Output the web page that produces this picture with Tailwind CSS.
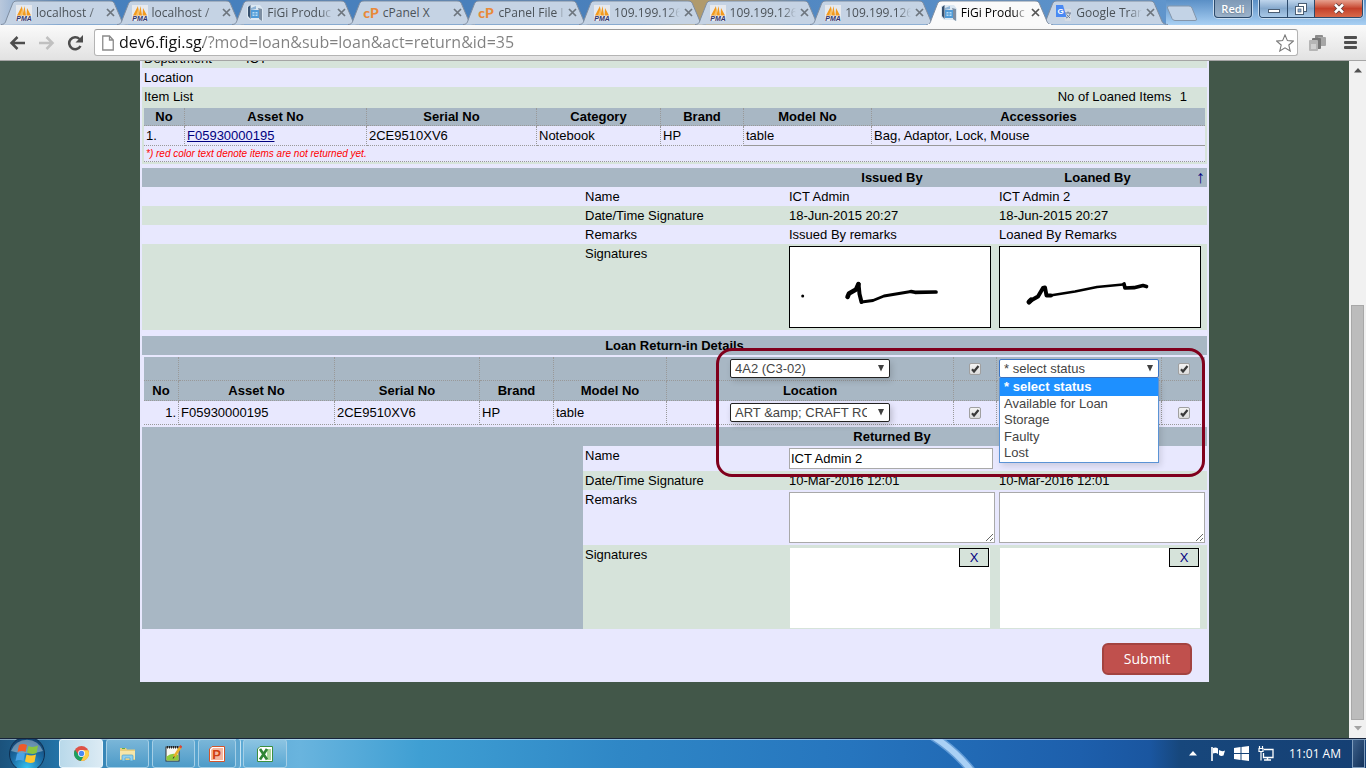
<!DOCTYPE html>
<html lang="en">
<head>
<meta charset="utf-8">
<title>FiGi Productivity Tools</title>
<script src="https://cdn.jsdelivr.net/npm/@tailwindcss/browser@4"></script>
</head>
<body class="h-screen overflow-hidden flex flex-col bg-[#425749] font-['Liberation_Sans',Arial,sans-serif] text-[13px] leading-[15px] text-black">

<!-- Shared icon symbols -->
<svg class="hidden" aria-hidden="true">
  <symbol id="tab-shape" viewBox="0 0 131 25">
    <path d="M1 24.500C5 24.500 5.500 22 6.500 19L12 5C13 2 14 1 17 1H110C113 1 114 2 115 5L121 19C122 22 123 24.500 128 24.500" fill="#c5d3e4" stroke="#7f8da0"/>
  </symbol>
  <symbol id="tab-active" viewBox="0 0 131 25">
    <path d="M1 25C5 25 5.500 22 6.500 19L12 5C13 2 14 1 17 1H110C113 1 114 2 115 5L121 19C122 22 123 25 128 25" fill="#fafafa" stroke="#7f8da0"/>
    <path d="M3 24.500H126" stroke="#fafafa"/>
  </symbol>
  <symbol id="pma" viewBox="0 0 16 16">
    <rect width="16" height="16" fill="#e6e9ee"/>
    <path d="M1 10.500 6 1V10.500ZM6.500 10.500 8.500 1 10 10.500ZM10.500 10.500 11 3 15 10.500Z" fill="#f39a1e"/>
    <path d="M4 10 7 2V10Z" fill="#f9bf62"/>
    <text x="8" y="16" font-family="Liberation Sans" font-weight="700" font-style="italic" font-size="7" text-anchor="middle" fill="#33366f">PMA</text>
  </symbol>
  <symbol id="figi" viewBox="0 0 16 16">
    <path d="M0 1 4 0H13L16 4V16L12 15H3L0 12Z" fill="#dce8f2"/>
    <path d="M1 2 3.500 0V14L1 11Z" fill="#37516f"/>
    <path d="M4 3 9 1V4L4 5Z" fill="#8fb4d6"/>
    <path d="M11 3 15 4V16L12 14V6Z" fill="#7d8ea2"/>
    <rect x="4" y="5" width="8" height="8" fill="#4f9bd8"/>
    <path d="M5.500 7H10.500V11H5.500Z" fill="#b9dcf4"/>
    <path d="M5.500 9H10.500M8 7V11" stroke="#4f9bd8"/>
  </symbol>
  <symbol id="cp" viewBox="0 0 16 16">
    <text x="8" y="13" font-family="Lato" font-weight="900" font-size="14" text-anchor="middle" fill="#e8893a">cP</text>
  </symbol>
  <symbol id="gtr" viewBox="0 0 16 16">
    <path d="M6 4H15V16H9Z" fill="#d5dbe4"/>
    <path d="M9 8H15M12 6.500V8M10 13C13 12 14 10 14 8M10.500 9.500 14 13" stroke="#6c7f99" fill="none"/>
    <path d="M0 0H7L10.500 12H0Z" fill="#4a89f3"/>
    <text x="4.500" y="9" font-family="Liberation Sans" font-weight="700" font-size="8" text-anchor="middle" fill="#fff">G</text>
  </symbol>
  <symbol id="close" viewBox="0 0 9 9"><path d="M1 1 8 8M8 1 1 8" stroke="currentColor" stroke-width="1.700"/></symbol>
  <symbol id="tick" viewBox="0 0 12 12"><path d="M3 6.300 5 8.500 9.500 3" fill="none" stroke="#3a3a3a" stroke-width="2.200"/></symbol>
  <symbol id="down" viewBox="0 0 8 7"><path d="M1 0H7L4 6.500Z" fill="#404040"/></symbol>
</svg>

<!-- Browser tab strip -->
<header class="relative h-[25px] shrink-0 flex items-stretch bg-[linear-gradient(90deg,#b9c8dc_0px,#4680be_60px,#4a80bb_640px,#b09a6c_690px,#b09a6c_750px,#5288c2_800px,#5f94cb_1150px,#6ea2d6_1366px)] font-['Open_Sans',sans-serif] text-[12px] text-[#4b5258]">
  <div class="absolute inset-y-0 right-0 w-[200px] bg-linear-to-b from-[#5a8fc6] to-[#a9d0f3]"></div>
  <nav class="relative flex w-[1156px] ml-[8px]" aria-label="Tabs">
    <a href="#" class="relative flex-1 flex items-center pl-[8px]"><svg class="absolute top-0 -left-[8px] w-[131px] h-[25px]"><use href="#tab-shape"/></svg><svg class="relative w-[16px] h-[16px] shrink-0"><use href="#pma"/></svg><span class="relative ml-[4px] w-[66px] whitespace-nowrap mask-r-from-80%">localhost /</span><svg class="relative ml-[4px] w-[9px] h-[9px] shrink-0 text-[#6d757e]"><use href="#close"/></svg></a>
    <a href="#" class="relative flex-1 flex items-center pl-[8px]"><svg class="absolute top-0 -left-[8px] w-[131px] h-[25px]"><use href="#tab-shape"/></svg><svg class="relative w-[16px] h-[16px] shrink-0"><use href="#pma"/></svg><span class="relative ml-[4px] w-[66px] whitespace-nowrap mask-r-from-80%">localhost /</span><svg class="relative ml-[4px] w-[9px] h-[9px] shrink-0 text-[#6d757e]"><use href="#close"/></svg></a>
    <a href="#" class="relative flex-1 flex items-center pl-[8px]"><svg class="absolute top-0 -left-[8px] w-[131px] h-[25px]"><use href="#tab-shape"/></svg><svg class="relative w-[16px] h-[16px] shrink-0"><use href="#figi"/></svg><span class="relative ml-[4px] w-[66px] whitespace-nowrap mask-r-from-80%">FiGi Produc</span><svg class="relative ml-[4px] w-[9px] h-[9px] shrink-0 text-[#6d757e]"><use href="#close"/></svg></a>
    <a href="#" class="relative flex-1 flex items-center pl-[8px]"><svg class="absolute top-0 -left-[8px] w-[131px] h-[25px]"><use href="#tab-shape"/></svg><svg class="relative w-[16px] h-[16px] shrink-0"><use href="#cp"/></svg><span class="relative ml-[4px] w-[66px] whitespace-nowrap">cPanel X</span><svg class="relative ml-[4px] w-[9px] h-[9px] shrink-0 text-[#6d757e]"><use href="#close"/></svg></a>
    <a href="#" class="relative flex-1 flex items-center pl-[8px]"><svg class="absolute top-0 -left-[8px] w-[131px] h-[25px]"><use href="#tab-shape"/></svg><svg class="relative w-[16px] h-[16px] shrink-0"><use href="#cp"/></svg><span class="relative ml-[4px] w-[66px] whitespace-nowrap mask-r-from-90%">cPanel File I</span><svg class="relative ml-[4px] w-[9px] h-[9px] shrink-0 text-[#6d757e]"><use href="#close"/></svg></a>
    <a href="#" class="relative flex-1 flex items-center pl-[8px]"><svg class="absolute top-0 -left-[8px] w-[131px] h-[25px]"><use href="#tab-shape"/></svg><svg class="relative w-[16px] h-[16px] shrink-0"><use href="#pma"/></svg><span class="relative ml-[4px] w-[66px] whitespace-nowrap mask-r-from-80%">109.199.126</span><svg class="relative ml-[4px] w-[9px] h-[9px] shrink-0 text-[#6d757e]"><use href="#close"/></svg></a>
    <a href="#" class="relative flex-1 flex items-center pl-[8px]"><svg class="absolute top-0 -left-[8px] w-[131px] h-[25px]"><use href="#tab-shape"/></svg><svg class="relative w-[16px] h-[16px] shrink-0"><use href="#pma"/></svg><span class="relative ml-[4px] w-[66px] whitespace-nowrap mask-r-from-80%">109.199.126</span><svg class="relative ml-[4px] w-[9px] h-[9px] shrink-0 text-[#6d757e]"><use href="#close"/></svg></a>
    <a href="#" class="relative flex-1 flex items-center pl-[8px]"><svg class="absolute top-0 -left-[8px] w-[131px] h-[25px]"><use href="#tab-shape"/></svg><svg class="relative w-[16px] h-[16px] shrink-0"><use href="#pma"/></svg><span class="relative ml-[4px] w-[66px] whitespace-nowrap mask-r-from-80%">109.199.126</span><svg class="relative ml-[4px] w-[9px] h-[9px] shrink-0 text-[#6d757e]"><use href="#close"/></svg></a>
    <a href="#" class="relative z-10 flex-1 flex items-center pl-[8px] text-black" aria-current="page"><svg class="absolute top-0 -left-[8px] w-[131px] h-[25px]"><use href="#tab-active"/></svg><svg class="relative w-[16px] h-[16px] shrink-0"><use href="#figi"/></svg><span class="relative ml-[4px] w-[66px] whitespace-nowrap mask-r-from-80%">FiGi Produc</span><svg class="relative ml-[4px] w-[9px] h-[9px] shrink-0 text-[#555]"><use href="#close"/></svg></a>
    <a href="#" class="relative flex-1 flex items-center pl-[8px]"><svg class="absolute top-0 -left-[8px] w-[131px] h-[25px]"><use href="#tab-shape"/></svg><svg class="relative w-[16px] h-[16px] shrink-0"><use href="#gtr"/></svg><span class="relative ml-[4px] w-[66px] whitespace-nowrap mask-r-from-80%">Google Trar</span><svg class="relative ml-[4px] w-[9px] h-[9px] shrink-0 text-[#6d757e]"><use href="#close"/></svg></a>
  </nav>
  <button class="relative w-[32px] h-[17px] mt-[5px] ml-[2px] shrink-0" aria-label="New tab">
    <svg viewBox="0 0 32 17" class="w-[32px] h-[17px]"><path d="M1.500 3Q1 1 3 1H23Q25 1 26 3L30.500 14Q31 15.500 29 15.500H9Q7 15.500 6 13.500Z" fill="#c3d3e6" stroke="#8496ab"/></svg>
  </button>
  <div class="relative ml-auto mr-[3px] flex items-start">
    <button class="w-[38px] h-[18px] mr-[7px] rounded-b-[4px] border border-t-0 border-[#2c4a6b] bg-linear-to-b from-[#7e99b6] to-[#9db4cc] text-white font-semibold text-[11px] leading-[17px] text-shadow-md shadow-[0_0_0_1px_#c8dcf0]">Redi</button>
    <div class="flex h-[18px] rounded-b-[4px] border border-t-0 border-[#2c4a6b] overflow-hidden shadow-[0_0_0_1px_#c8dcf0]">
      <button class="w-[28px] grid place-items-center border-r border-[#2c4a6b] bg-linear-to-b from-[#bfd5ec] via-[#86a9cd] to-[#a9c9e8]" aria-label="Minimize"><svg viewBox="0 0 12 4" class="w-[12px] h-[4px] mt-[4px]"><rect x=".500" y=".500" width="11" height="3" fill="#fff" stroke="#4a5d73"/></svg></button>
      <button class="w-[27px] grid place-items-center border-r border-[#2c4a6b] bg-linear-to-b from-[#bfd5ec] via-[#86a9cd] to-[#a9c9e8]" aria-label="Restore"><svg viewBox="0 0 12 12" class="w-[12px] h-[12px]"><rect x="3.500" y=".500" width="8" height="8" fill="#fff" stroke="#4a5d73"/><rect x=".500" y="3.500" width="8" height="8" fill="#fff" stroke="#4a5d73"/><rect x="3" y="6" width="3" height="3" fill="#8fb0d3" stroke="#4a5d73" stroke-width=".7"/></svg></button>
      <button class="w-[47px] grid place-items-center bg-linear-to-b from-[#e6a08e] via-[#c4402a] to-[#d8694a]" aria-label="Close"><svg viewBox="0 0 12 11" class="w-[12px] h-[11px]"><path d="M2 1.500 10 9.500M10 1.500 2 9.500" stroke="#5b3a3a" stroke-width="4"/><path d="M2 1.500 10 9.500M10 1.500 2 9.500" stroke="#fff" stroke-width="2.500"/></svg></button>
    </div>
  </div>
</header>

<!-- Toolbar -->
<div class="h-[36px] shrink-0 flex items-center bg-linear-to-b from-[#fafafa] to-[#e2e2e2] border-b border-[#a5a5a5] pl-[9px] pr-[9px]">
  <button class="w-[17px] h-[16px]" aria-label="Back"><svg viewBox="0 0 17 16" class="w-[17px] h-[16px]" fill="none" stroke="#4d4d4d" stroke-width="2.500"><path d="M2.500 8H16M8.500 2 2.500 8 8.500 14"/></svg></button>
  <button class="w-[17px] h-[16px] ml-[12px]" aria-label="Forward"><svg viewBox="0 0 17 16" class="w-[17px] h-[16px]" fill="none" stroke="#c0c0c0" stroke-width="2.500"><path d="M1 8H14.500M8.500 2 14.500 8 8.500 14"/></svg></button>
  <button class="w-[17px] h-[16px] ml-[12px]" aria-label="Reload"><svg viewBox="0 0 17 16" class="w-[17px] h-[16px]"><path d="M13.500 11A6 6 0 1 1 12.500 4" fill="none" stroke="#4d4d4d" stroke-width="2.500"/><path d="M16 0V7.500H8.500Z" fill="#4d4d4d"/></svg></button>
  <div class="ml-[10px] flex-1 h-[27px] flex items-center bg-white border border-[#b4b4b4] border-t-[#9a9a9a] rounded-[3px] pl-[7px] pr-[3px]">
    <svg viewBox="0 0 12 16" class="w-[12px] h-[16px] shrink-0"><path d="M.75 1H7.500L11.250 5V15H.75ZM7.500 1V5H11.250" fill="#fff" stroke="#8a8a8a" stroke-width="1.300"/></svg>
    <input aria-label="Address" value="dev6.figi.sg/?mod=loan&amp;sub=loan&amp;act=return&amp;id=35" class="flex-1 min-w-0 ml-[5px] mb-[2px] outline-none font-['Open_Sans',sans-serif] text-[16px] leading-[22px] bg-[linear-gradient(90deg,#111_84px,#808080_84px)] bg-clip-text text-transparent">
    <svg viewBox="0 0 18 18" class="w-[18px] h-[18px] shrink-0"><path d="M9 1 11.400 6.600 17.300 7.100 12.800 11 14.200 17 9 13.800 3.800 17 5.200 11 .700 7.100 6.600 6.600Z" fill="#fff" stroke="#777" stroke-width="1.100"/></svg>
  </div>
  <svg viewBox="0 0 17 16" class="w-[17px] h-[16px] ml-[11px]"><rect x="6" y="0" width="8" height="10" rx="1" fill="#8c8c8c"/><rect x="9" y="2" width="8" height="9" rx="1" fill="#a6a6a6"/><rect x="3" y="3" width="9" height="11" rx="1" fill="#777"/><rect x="0" y="5" width="9" height="11" rx="1" fill="#b5b5b5"/><rect x="2" y="9" width="5" height="5" fill="#d0d0d0"/></svg>
  <button class="w-[13px] h-[13px] ml-[18px] flex flex-col justify-between" aria-label="Menu"><span class="h-[3px] w-full bg-[#4f4f4f] rounded-[1px]"></span><span class="h-[3px] w-full bg-[#4f4f4f] rounded-[1px]"></span><span class="h-[3px] w-full bg-[#4f4f4f] rounded-[1px]"></span></button>
</div>

<!-- Page viewport -->
<div class="flex-1 min-h-0 flex">
  <main class="flex-1 min-w-0 overflow-hidden">
    <form class="relative mx-auto w-full max-w-[1069px] bg-[#e8e8fe] px-[2px] pb-[7px]">
      <div class="h-[7px] overflow-hidden flex items-end bg-[#d6e3da] px-[2px]">
        <div class="flex h-[19px] py-[2px]"><span class="w-[102px]">Department</span><span>ICT</span></div>
      </div>
      <div class="px-[2px] py-[2px]">Location</div>

      <section class="bg-[#d6e3da] px-[2px] pb-[2px]">
        <div class="flex justify-between pt-[2px] pb-[4px]"><span>Item List</span><span class="pr-[18px]">No of Loaned Items <span class="ml-[5px]">1</span></span></div>
        <table class="w-full table-fixed border-separate border-spacing-0">
          <colgroup><col class="w-[41px]"><col class="w-[182px]"><col class="w-[170px]"><col class="w-[124px]"><col class="w-[83px]"><col class="w-[128px]"><col></colgroup>
          <thead class="bg-[#a8b7c4]">
            <tr>
              <th class="h-[18px] p-0 border-b border-r border-dotted border-[#999]">No</th>
              <th class="p-0 border-b border-r border-dotted border-[#999]">Asset No</th>
              <th class="p-0 border-b border-r border-dotted border-[#999]">Serial No</th>
              <th class="p-0 border-b border-r border-dotted border-[#999]">Category</th>
              <th class="p-0 border-b border-r border-dotted border-[#999]">Brand</th>
              <th class="p-0 border-b border-r border-dotted border-[#999]">Model No</th>
              <th class="p-0 border-b border-dotted border-[#999]">Accessories</th>
            </tr>
          </thead>
          <tbody class="bg-[#e8e8fe]">
            <tr>
              <td class="h-[20px] px-[2px] py-0 border-b border-r border-dotted border-[#999]">1.</td>
              <td class="px-[2px] py-0 border-b border-r border-dotted border-[#999]"><a href="#" class="text-[#000080] underline">F05930000195</a></td>
              <td class="px-[2px] py-0 border-b border-r border-dotted border-[#999]">2CE9510XV6</td>
              <td class="px-[2px] py-0 border-b border-r border-dotted border-[#999]">Notebook</td>
              <td class="px-[2px] py-0 border-b border-r border-dotted border-[#999]">HP</td>
              <td class="px-[2px] py-0 border-b border-r border-dotted border-[#999] [border-bottom-style:solid]">table</td>
              <td class="px-[2px] py-0 border-b border-solid border-[#999]">Bag, Adaptor, Lock, Mouse</td>
            </tr>
            <tr><td colspan="7" class="h-[16px] px-[2px] py-0 border-b border-dotted border-[#999] text-[10px] leading-[12px] italic text-[#f00]">*) red color text denote items are not returned yet.</td></tr>
          </tbody>
        </table>
      </section>

      <table class="mt-[4px] w-full table-fixed border-separate border-spacing-0">
        <colgroup><col><col class="w-[204px]"><col class="w-[210px]"><col class="w-[210px]"></colgroup>
        <tbody>
          <tr class="bg-[#a8b7c4]"><td class="p-0"></td><td class="p-0"></td><th class="p-[2px]">Issued By</th><th class="p-[2px]"><div class="flex items-center h-[15px]"><span class="flex-1">Loaned By</span><a href="#" class="font-normal text-[18px] leading-[15px] font-['Liberation_Serif',serif] text-[#000080]">↑</a></div></th></tr>
          <tr><td class="p-0"></td><td class="p-[2px]">Name</td><td class="p-[2px]">ICT Admin</td><td class="p-[2px]">ICT Admin 2</td></tr>
          <tr class="bg-[#d6e3da]"><td class="p-0"></td><td class="p-[2px]">Date/Time Signature</td><td class="p-[2px]">18-Jun-2015 20:27</td><td class="p-[2px]">18-Jun-2015 20:27</td></tr>
          <tr><td class="p-0"></td><td class="p-[2px]">Remarks</td><td class="p-[2px]">Issued By remarks</td><td class="p-[2px]">Loaned By Remarks</td></tr>
          <tr class="bg-[#d6e3da] align-top"><td class="p-0"></td><td class="p-[2px]">Signatures</td>
            <td class="p-[2px]"><div class="w-[202px] h-[82px] bg-white border border-black"><svg viewBox="790 247 200 80" class="w-[200px] h-[80px]" fill="none" stroke="#000" stroke-linecap="round" stroke-linejoin="round"><circle cx="802.700" cy="296" r="1.500" fill="#000" stroke="none"/><path d="M847.500 297 849 293.500 856 289.500 858.500 284" stroke-width="4.500"/><path d="M858.500 284 859.500 294 861.500 302" stroke-width="4"/><path d="M861.500 302 873 300.500 884 296 911 291.500" stroke-width="2.800"/><path d="M911 291.500 915 292.300 936 292" stroke-width="3.700"/></svg></div></td>
            <td class="p-[2px]"><div class="w-[202px] h-[82px] bg-white border border-black"><svg viewBox="1000 247 200 80" class="w-[200px] h-[80px]" fill="none" stroke="#000" stroke-linecap="round" stroke-linejoin="round"><path d="M1029 302 1031 300" stroke-width="5"/><path d="M1030 301 1038 296.500 1043 288 1045 287.500 1046.500 295.500 1051 295.500" stroke-width="4"/><path d="M1050 295.500 1075 291.500 1097 287 1123 284.500" stroke-width="2.500"/><path d="M1124 284 1125 288 1134 287.700 1143 285.500 1146.500 286.500" stroke-width="3.700"/></svg></div></td>
          </tr>
        </tbody>
      </table>

      <h2 class="mt-[6px] py-[2px] text-center font-bold bg-[#a8b7c4]">Loan Return-in Details</h2>

      <div class="p-[2px]">
        <table class="w-full table-fixed border-separate border-spacing-0">
          <colgroup><col class="w-[35px]"><col class="w-[156px]"><col class="w-[145px]"><col class="w-[74px]"><col class="w-[113px]"><col><col class="w-[43px]"><col class="w-[165px]"><col class="w-[43px]"></colgroup>
          <thead class="bg-[#a8b7c4]">
            <tr>
              <td class="h-[24px] p-0 border-b border-r border-dotted border-[#999]"></td>
              <td class="p-0 border-b border-r border-dotted border-[#999]"></td>
              <td class="p-0 border-b border-r border-dotted border-[#999]"></td>
              <td class="p-0 border-b border-r border-dotted border-[#999]"></td>
              <td class="p-0 border-b border-r border-dotted border-[#999]"></td>
              <td class="p-0 border-b border-r border-dotted border-[#999]">
                <div class="relative mx-auto w-[160px]"><select aria-label="Location for all items" class="block appearance-none w-full h-[19px] pl-[4px] pr-[22px] bg-white border border-[#222] rounded-[2px] text-[#444] shadow-[2px_3px_6px_rgba(0,0,0,0.15)]"><option>4A2 (C3-02)</option></select><svg class="absolute right-[5px] top-[6px] w-[8px] h-[7px]"><use href="#down"/></svg></div>
              </td>
              <td class="p-0 border-b border-r border-dotted border-[#999]"><div class="relative mx-auto w-[12px] h-[12px]"><input type="checkbox" checked aria-label="Apply location to all" class="block appearance-none w-[12px] h-[12px] border border-[#a0a0a0] rounded-[2px] bg-linear-to-b from-[#f4f4f4] to-[#dcdcdc]"><svg class="absolute inset-0 w-[12px] h-[12px]"><use href="#tick"/></svg></div></td>
              <td class="p-0 border-b border-r border-dotted border-[#999]">
                <div class="relative mx-auto w-[160px]">
                  <select aria-label="Status for all items" class="block appearance-none w-full h-[19px] pl-[4px] pr-[22px] bg-white border border-[#3b74c4] rounded-[2px] text-[#444]"><option>* select status</option></select><svg class="absolute right-[5px] top-[6px] w-[8px] h-[7px]"><use href="#down"/></svg>
                  <ul class="absolute z-10 top-full left-0 w-full h-[85px] bg-white border border-t-0 border-[#5b93d5] text-[#444] leading-[16px] shadow-[2px_3px_6px_rgba(0,0,0,0.12)]">
                    <li class="h-[18px] pl-[4px] leading-[18px] font-bold text-white bg-[#1e90ff]">* select status</li>
                    <li class="pl-[4px]">Available for Loan</li>
                    <li class="pl-[4px]">Storage</li>
                    <li class="pl-[4px] leading-[17px]">Faulty</li>
                    <li class="pl-[4px]">Lost</li>
                  </ul>
                </div>
              </td>
              <td class="p-0 border-b border-dotted border-[#999]"><div class="relative mx-auto w-[12px] h-[12px]"><input type="checkbox" checked aria-label="Apply status to all" class="block appearance-none w-[12px] h-[12px] border border-[#a0a0a0] rounded-[2px] bg-linear-to-b from-[#f4f4f4] to-[#dcdcdc]"><svg class="absolute inset-0 w-[12px] h-[12px]"><use href="#tick"/></svg></div></td>
            </tr>
            <tr>
              <th class="h-[20px] p-0 border-b border-r border-dotted border-[#999]">No</th>
              <th class="p-0 border-b border-r border-dotted border-[#999]">Asset No</th>
              <th class="p-0 border-b border-r border-dotted border-[#999]">Serial No</th>
              <th class="p-0 border-b border-r border-dotted border-[#999]">Brand</th>
              <th class="p-0 border-b border-r border-dotted border-[#999]">Model No</th>
              <th class="p-0 border-b border-r border-dotted border-[#999]">Location</th>
              <td class="p-0 border-b border-r border-dotted border-[#999]"></td>
              <td class="p-0 border-b border-r border-dotted border-[#999]"></td>
              <td class="p-0 border-b border-dotted border-[#999]"></td>
            </tr>
          </thead>
          <tbody>
            <tr>
              <td class="h-[24px] px-[2px] py-0 text-right border-b border-r border-dotted border-[#999]">1.</td>
              <td class="px-[2px] py-0 border-b border-r border-dotted border-[#999]">F05930000195</td>
              <td class="px-[2px] py-0 border-b border-r border-dotted border-[#999]">2CE9510XV6</td>
              <td class="px-[2px] py-0 border-b border-r border-dotted border-[#999]">HP</td>
              <td class="px-[2px] py-0 border-b border-r border-dotted border-[#999]">table</td>
              <td class="p-0 border-b border-r border-dotted border-[#999]">
                <div class="relative mx-auto w-[160px]"><select aria-label="Item location" class="block appearance-none w-full h-[19px] pl-[4px] pr-[22px] bg-white border border-[#222] rounded-[2px] text-[#444] shadow-[2px_3px_6px_rgba(0,0,0,0.2)]"><option>ART &amp;amp; CRAFT ROOM</option></select><svg class="absolute right-[5px] top-[6px] w-[8px] h-[7px]"><use href="#down"/></svg></div>
              </td>
              <td class="p-0 border-b border-r border-dotted border-[#999]"><div class="relative mx-auto w-[12px] h-[12px]"><input type="checkbox" checked aria-label="Apply item location" class="block appearance-none w-[12px] h-[12px] border border-[#a0a0a0] rounded-[2px] bg-linear-to-b from-[#f4f4f4] to-[#dcdcdc]"><svg class="absolute inset-0 w-[12px] h-[12px]"><use href="#tick"/></svg></div></td>
              <td class="p-0 border-b border-r border-dotted border-[#999]"></td>
              <td class="p-0 border-b border-dotted border-[#999]"><div class="relative mx-auto w-[12px] h-[12px]"><input type="checkbox" checked aria-label="Apply item status" class="block appearance-none w-[12px] h-[12px] border border-[#a0a0a0] rounded-[2px] bg-linear-to-b from-[#f4f4f4] to-[#dcdcdc]"><svg class="absolute inset-0 w-[12px] h-[12px]"><use href="#tick"/></svg></div></td>
            </tr>
          </tbody>
        </table>
      </div>

      <table class="w-full table-fixed border-separate border-spacing-0">
        <colgroup><col><col class="w-[204px]"><col class="w-[210px]"><col class="w-[210px]"></colgroup>
        <tbody>
          <tr class="bg-[#a8b7c4]"><td rowspan="5" class="p-0 bg-[#a8b7c4]"></td><td class="p-0"></td><th class="p-[2px]">Returned By</th><td class="p-0"></td></tr>
          <tr class="align-top"><td class="p-[2px]"><label for="returned-name">Name</label></td><td class="p-[2px]"><input id="returned-name" value="ICT Admin 2" class="block w-[204px] h-[21px] px-[1px] bg-white border border-[#a9a9a9]"></td><td class="p-0"></td></tr>
          <tr class="bg-[#d6e3da]"><td class="p-[2px]">Date/Time Signature</td><td class="p-[2px]">10-Mar-2016 12:01</td><td class="p-[2px]">10-Mar-2016 12:01</td></tr>
          <tr class="align-top"><td class="p-[2px]">Remarks</td><td class="p-[2px]"><textarea aria-label="Returned by remarks" class="block w-[206px] h-[51px] bg-white border border-[#a9a9a9]"></textarea></td><td class="p-[2px]"><textarea aria-label="Received by remarks" class="block w-[206px] h-[51px] bg-white border border-[#a9a9a9]"></textarea></td></tr>
          <tr class="bg-[#d6e3da] align-top"><td class="p-[2px]">Signatures</td>
            <td class="px-[3px] pt-[3px] pb-[1px]"><div class="flex justify-end items-start w-[200px] h-[80px] bg-white pr-[1px]"><button type="button" class="w-[30px] h-[19px] bg-[#d6e3da] border border-black text-[#000080]">X</button></div></td>
            <td class="px-[3px] pt-[3px] pb-[1px]"><div class="flex justify-end items-start w-[200px] h-[80px] bg-white pr-[1px]"><button type="button" class="w-[30px] h-[19px] bg-[#d6e3da] border border-black text-[#000080]">X</button></div></td>
          </tr>
        </tbody>
      </table>

      <div class="flex justify-end mt-[14px] pr-[15px]">
        <button type="button" class="w-[90px] h-[32px] rounded-[6px] border-2 border-[#a34340] bg-[#c0504d] text-white font-['Open_Sans',sans-serif] text-[14px] leading-[20px]">Submit</button>
      </div>

      <!-- Highlight frame around the bulk-update controls -->
      <div class="absolute z-20 left-[576px] top-[287px] w-[489px] h-[129px] border-3 border-[#80001c] rounded-[16px] pointer-events-none"></div>
    </form>
  </main>
  <div class="w-[17px] shrink-0 flex flex-col items-center bg-[#f1f1f1]" aria-hidden="true">
    <svg viewBox="0 0 8 5" class="w-[8px] h-[5px] mt-[7px]"><path d="M4 0 8 4.500H0Z" fill="#505050"/></svg>
    <div class="mt-[232px] w-[13px] flex-1 bg-[#bcbcbc] border border-[#a8a8a8]"></div>
    <svg viewBox="0 0 8 5" class="w-[8px] h-[5px] mt-[6px] mb-[7px]"><path d="M4 4.500 8 0H0Z" fill="#a3a3a3"/></svg>
  </div>
</div>

<!-- Taskbar -->
<footer class="relative h-[30px] shrink-0 flex items-stretch border-t border-[#16243a] shadow-[inset_0_1px_0_rgba(255,255,255,0.45)] bg-[linear-gradient(90deg,#1b527c_0px,#2372a6_58px,#4d9bc8_150px,#69b4de_300px,#3f9fd3_420px,#2f87c6_620px,#2675be_850px,#1d5fac_1080px,#1a56a0_1150px,#17477c_1180px,#153f73_1366px)] overflow-hidden">
  <svg viewBox="0 0 60 30" class="absolute left-[925px] top-0 w-[60px] h-[30px]" aria-hidden="true"><path d="M6 -4C22 6 36 18 48 34" fill="none" stroke="#8dbdec" stroke-opacity=".6" stroke-width="9"/><path d="M6 -4C22 6 36 18 48 34" fill="none" stroke="#a9d0f5" stroke-width="6"/></svg>
  <button class="relative w-[36px] ml-[9px] shrink-0" aria-label="Start">
    <svg viewBox="0 0 36 29" class="w-[36px] h-[29px]">
      <defs><radialGradient id="orb" cx=".5" cy=".9" r=".9"><stop offset="0" stop-color="#35c4f2"/><stop offset=".5" stop-color="#1c6fa8"/><stop offset="1" stop-color="#123c68"/></radialGradient></defs>
      <circle cx="18" cy="15" r="17.500" fill="url(#orb)" stroke="#0f2f50"/>
      <path d="M2 12A17 17 0 0 1 34 12Q18 17 2 12Z" fill="#fff" fill-opacity=".35"/>
      <path d="M10 6Q14 4 18 6L16.500 13Q13 11 8.500 13Z" fill="#ee5a2a"/>
      <path d="M19.500 7Q24 9 29 6.500L27.500 14Q23 16 18 13.500Z" fill="#8ac43f"/>
      <path d="M8 14.500Q12 13 16 14.500L14.500 22Q11 20 6.500 22Z" fill="#4aa3e6"/>
      <path d="M17.500 15.500Q22 17.500 27 15.500L25.500 23Q21 25 16 22.500Z" fill="#fdc62f"/>
    </svg>
  </button>
  <div class="relative flex items-stretch ml-[14px]">
    <button aria-label="Chrome" class="w-[44px] grid place-items-center rounded-[3px] border border-[#e9f5fc] bg-linear-to-r from-[#b9d9ea] to-[#dcebf4]">
      <svg viewBox="0 0 16 16" class="w-[15px] h-[15px]"><circle cx="8" cy="8" r="8" fill="#de5246"/><path d="M1.100 4A8 8 0 0 0 7.500 16L11 9.700 8 8 5 9.800Z" fill="#1aa15f"/><path d="M7.500 16A8 8 0 0 0 15.200 4.500H8L11 9.700Z" fill="#fcd048"/><circle cx="8" cy="8" r="3.700" fill="#fff"/><circle cx="8" cy="8" r="2.900" fill="#4a8af4"/></svg>
    </button>
    <button aria-label="File Explorer" class="w-[43px] ml-[3px] grid place-items-center rounded-[3px] border border-[#a5cfe6] bg-linear-to-b from-[#7ab6d8] to-[#4d9bc8]">
      <svg viewBox="0 0 17 16" class="w-[17px] h-[16px]"><path d="M1 2H7L8 3.500H16V14H1Z" fill="#e9cf7c"/><path d="M1 5H16V13H1Z" fill="#f6e6a9"/><path d="M3 2.500H6" stroke="#5cae4b"/><path d="M3 15V10Q3 9 4 9H13Q14 9 14 10V15H11V12H6V15Z" fill="#8fd0ef" stroke="#4a9fca" stroke-width=".7"/></svg>
    </button>
    <button aria-label="Text editor" class="w-[43px] ml-[3px] grid place-items-center rounded-[3px] border border-[#a5cfe6] bg-linear-to-b from-[#7ab6d8] to-[#4d9bc8]">
      <svg viewBox="0 0 17 17" class="w-[17px] h-[17px]"><rect x="1" y="2" width="13" height="14" fill="#f7f7f2" stroke="#333"/><path d="M1.500 11.500Q7 7 13.500 10V15.500H1.500Z" fill="#8fcb3a"/><path d="M2.500 1V3.500M4.500 1V3.500M6.500 1V3.500M8.500 1V3.500M10.500 1V3.500M12.500 1V3.500" stroke="#222"/><path d="M15.500 2 9 12" stroke="#e9b02a" stroke-width="2.500"/><path d="M16.300 .8 15 2.800" stroke="#d5463a" stroke-width="2.500"/><path d="M9.200 11.500 8.200 13.500" stroke="#333"/></svg>
    </button>
    <button aria-label="PowerPoint" class="w-[38px] ml-[3px] grid place-items-center rounded-[3px] border border-[#a5cfe6] bg-linear-to-b from-[#7ab6d8] to-[#4d9bc8]">
      <svg viewBox="0 0 16 16" class="w-[16px] h-[16px]"><path d="M3 .5H15.500V15.500H.5V3Z" fill="#fff" stroke="#d2552b"/><path d="M4 2H14V14H2V4Z" fill="#f5b79f"/><text x="7.500" y="13" font-family="Liberation Sans" font-weight="700" font-size="13" text-anchor="middle" fill="#cf3f12">P</text></svg>
    </button>
    <span class="w-[5px] border-r border-[#c5e4f4] bg-[#5fa6cf] rounded-r-[3px]"></span>
    <button aria-label="Excel" class="w-[44px] ml-[2px] grid place-items-center rounded-[3px] border border-[#a5cfe6] bg-linear-to-b from-[#8cc4e2] to-[#5aa8d3]">
      <svg viewBox="0 0 16 16" class="w-[16px] h-[16px]"><path d="M3 .5H15.500V15.500H.5V3Z" fill="#fff" stroke="#3c8f40"/><path d="M10 3H14V14H10Z" fill="#a8d69a"/><path d="M3 3 10 13.500M10 3 3 13.500" stroke="#2f8436" stroke-width="2.700"/></svg>
    </button>
  </div>
  <div class="relative ml-auto flex items-center text-white">
    <svg viewBox="0 0 8 5" class="w-[8px] h-[5px]"><path d="M4 0 8 4.500H0Z" fill="#fff"/></svg>
    <svg viewBox="0 0 16 16" class="w-[16px] h-[16px] ml-[13px]"><path d="M2 1V15" stroke="#fff" stroke-width="1.600"/><path d="M3 2Q6 1 8 2.500V8Q6 6.500 3 7.500Z" fill="#fff"/><path d="M9 4Q12 6 15 4.500L13.500 9.500Q11 10.500 9 9Z" fill="#fff"/></svg>
    <svg viewBox="0 0 15 15" class="w-[15px] h-[15px] ml-[8px]"><path d="M0 2 6.500 1.100V7H0ZM7.500 1 15 0V7H7.500ZM0 8H6.500V13.900L0 13ZM7.500 8H15V15L7.500 14Z" fill="#fff"/></svg>
    <svg viewBox="0 0 16 16" class="w-[16px] h-[16px] ml-[9px]"><path d="M6 3.500H15V11.500H5.500V7" fill="none" stroke="#fff" stroke-width="1.300"/><path d="M6 14H13M9.500 12V14" stroke="#fff" stroke-width="1.500"/><path d="M1 2.500H5V5.500H1ZM1.500 0V2M4.500 0V2M3 6V14.500" stroke="#fff" stroke-width="1.200" fill="none"/></svg>
    <time class="ml-[15px] font-['Open_Sans',sans-serif] text-[12px] whitespace-nowrap">11:01 AM</time>
    <button class="ml-[11px] mr-[1px] w-[13px] self-stretch border border-[#7f9dbd] bg-linear-to-br from-[#3d6089] to-[#12315a]" aria-label="Show desktop"></button>
  </div>
</footer>
</body>
</html>
